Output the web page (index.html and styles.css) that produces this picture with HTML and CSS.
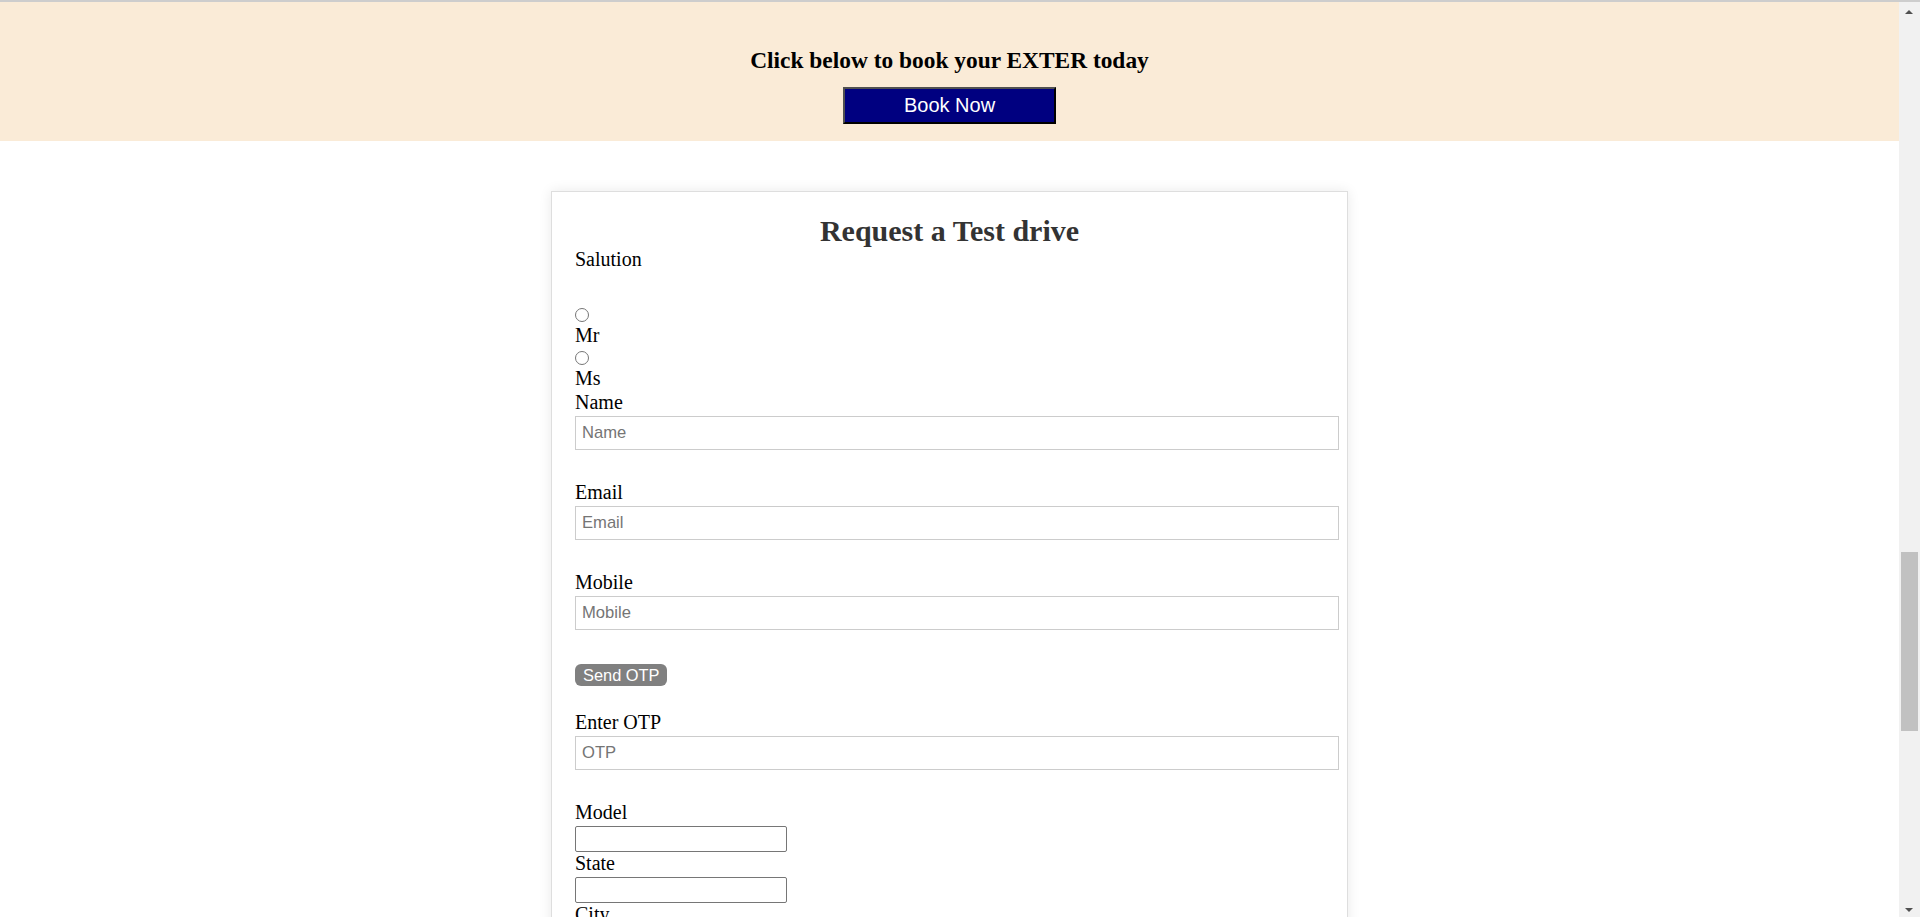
FILE: index.html
```html
<!DOCTYPE html>
<html lang="en">
<head>
<meta charset="utf-8">
<title>Book your EXTER</title>
<link rel="stylesheet" href="styles.css">
</head>
<body>
  <section class="book-band">
    <h3 class="book-title">Click below to book your EXTER today</h3>
    <button class="book-btn" type="button">Book Now</button>
  </section>

  <main class="card">
    <h2 class="card-title">Request a Test drive</h2>
    <label class="lbl">Salution</label>
    <div class="options">
      <div class="option"><input class="radio" type="radio" name="sal" id="mr"><label class="lbl opt-lbl" for="mr">Mr</label></div>
      <div class="option"><input class="radio" type="radio" name="sal" id="ms"><label class="lbl opt-lbl" for="ms">Ms</label></div>
    </div>

    <div class="field">
      <label class="lbl" for="name">Name</label>
      <input class="text-in" id="name" type="text" placeholder="Name">
    </div>
    <div class="field">
      <label class="lbl" for="email">Email</label>
      <input class="text-in" id="email" type="text" placeholder="Email">
    </div>
    <div class="field">
      <label class="lbl" for="mobile">Mobile</label>
      <input class="text-in" id="mobile" type="text" placeholder="Mobile">
    </div>
    <button class="otp-btn" type="button">Send OTP</button>
    <div class="field">
      <label class="lbl" for="otp">Enter OTP</label>
      <input class="text-in" id="otp" type="text" placeholder="OTP">
    </div>

    <div class="pick">
      <label class="lbl" for="model">Model</label>
      <select class="pick-box" id="model"></select>
    </div>
    <div class="pick">
      <label class="lbl" for="state">State</label>
      <select class="pick-box" id="state"></select>
    </div>
    <div class="pick">
      <label class="lbl" for="city">City</label>
      <select class="pick-box" id="city"></select>
    </div>
    <div class="pick">
      <label class="lbl" for="dealer">Dealer</label>
      <select class="pick-box" id="dealer"></select>
    </div>
    <button class="submit-btn" type="button">Submit</button>
  </main>

  <div class="scroll-rail" aria-hidden="true">
    <span class="rail-arrow rail-up"></span>
    <span class="rail-thumb"></span>
    <span class="rail-arrow rail-down"></span>
  </div>
</body>
</html>
```

FILE: styles.css
```css
html {
  overflow-y: hidden;
}

body {
  margin: 0;
  padding-right: 21px;
  border-top: 2px solid #cdcdcd;
  font-family: "Liberation Serif", "Times New Roman", serif;
  font-size: 20px;
  color: #000;
  background: #fff;
}

/* window scrollbar (page is shown scrolled part-way down) */
.scroll-rail {
  position: fixed;
  top: 2px;
  right: 0;
  bottom: 0;
  width: 21px;
  background: #f1f1f1;
}

.rail-thumb {
  position: absolute;
  left: 2px;
  right: 2px;
  top: 550px;
  height: 179px;
  background: #c1c1c1;
}

.rail-arrow {
  position: absolute;
  left: 6px;
  width: 0;
  height: 0;
  border-left: 4px solid transparent;
  border-right: 4px solid transparent;
}

.rail-up {
  top: 8px;
  border-bottom: 4px solid #505050;
}

.rail-down {
  bottom: 5px;
  border-top: 4px solid #505050;
}

.book-band {
  background: #faebd7;
  text-align: center;
  padding: 45px 0 17px;
}

.book-title {
  margin: 0;
  font-size: 1.17em;
  font-weight: bold;
}

.book-btn {
  display: inline-block;
  margin-top: 13px;
  width: 213px;
  height: 37px;
  box-sizing: border-box;
  background: #000080;
  color: #fff;
  font-family: "Liberation Sans", Arial, sans-serif;
  font-size: 20px;
  border: 2px solid;
  border-color: #505050 #000 #000 #505050;
  padding: 0;
  cursor: pointer;
}

.card {
  display: flex;
  flex-direction: column;
  width: 797px;
  box-sizing: border-box;
  margin: 50px auto 60px;
  padding: 22px 23px 40px;
  border: 1px solid #dedede;
  box-shadow: 0 0 12px rgba(0, 0, 0, 0.09);
  background: #fff;
}

.card-title {
  margin: 0;
  font-size: 30px;
  line-height: 34px;
  text-align: center;
  color: #333;
}

.lbl {
  display: block;
  line-height: 23px;
  margin-bottom: 2px;
}

.options {
  display: flex;
  flex-direction: column;
  margin: 31px 0 1px;
}

.option {
  display: flex;
  flex-direction: column;
  align-items: flex-start;
}

.opt-lbl {
  margin-bottom: 0;
}

.radio {
  display: block;
  width: 14px;
  height: 14px;
  margin: 4px 0 2px 0;
}

.field {
  margin-bottom: 31px;
}

.text-in {
  display: block;
  width: 100%;
  box-sizing: content-box;
  height: 18px;
  line-height: 18px;
  padding: 7px 7px 7px 6px;
  border: 1px solid #cccccc;
  border-radius: 0;
  font-family: "Liberation Sans", Arial, sans-serif;
  font-size: 16.6px;
  color: #333;
  outline: none;
}

.text-in::placeholder {
  color: #757575;
}

.otp-btn {
  align-self: flex-start;
  margin: 3px 0 25px;
  height: 22px;
  padding: 0 7px 0 8px;
  border: none;
  border-radius: 6px;
  background: #808080;
  color: #fff;
  font-family: "Liberation Sans", Arial, sans-serif;
  font-size: 16.4px;
  line-height: 22px;
  cursor: pointer;
}

.pick-box {
  display: block;
  width: 212px;
  height: 26px;
  box-sizing: border-box;
  margin: 0;
  border: 1px solid #767676;
  border-radius: 2px;
  background: #fff;
  appearance: none;
  font-family: "Liberation Sans", Arial, sans-serif;
  font-size: 16px;
}

.submit-btn {
  align-self: flex-start;
  margin-top: 24px;
  height: 30px;
  padding: 0 16px;
  border: none;
  border-radius: 6px;
  background: #000080;
  color: #fff;
  font-family: "Liberation Sans", Arial, sans-serif;
  font-size: 17px;
}
```
